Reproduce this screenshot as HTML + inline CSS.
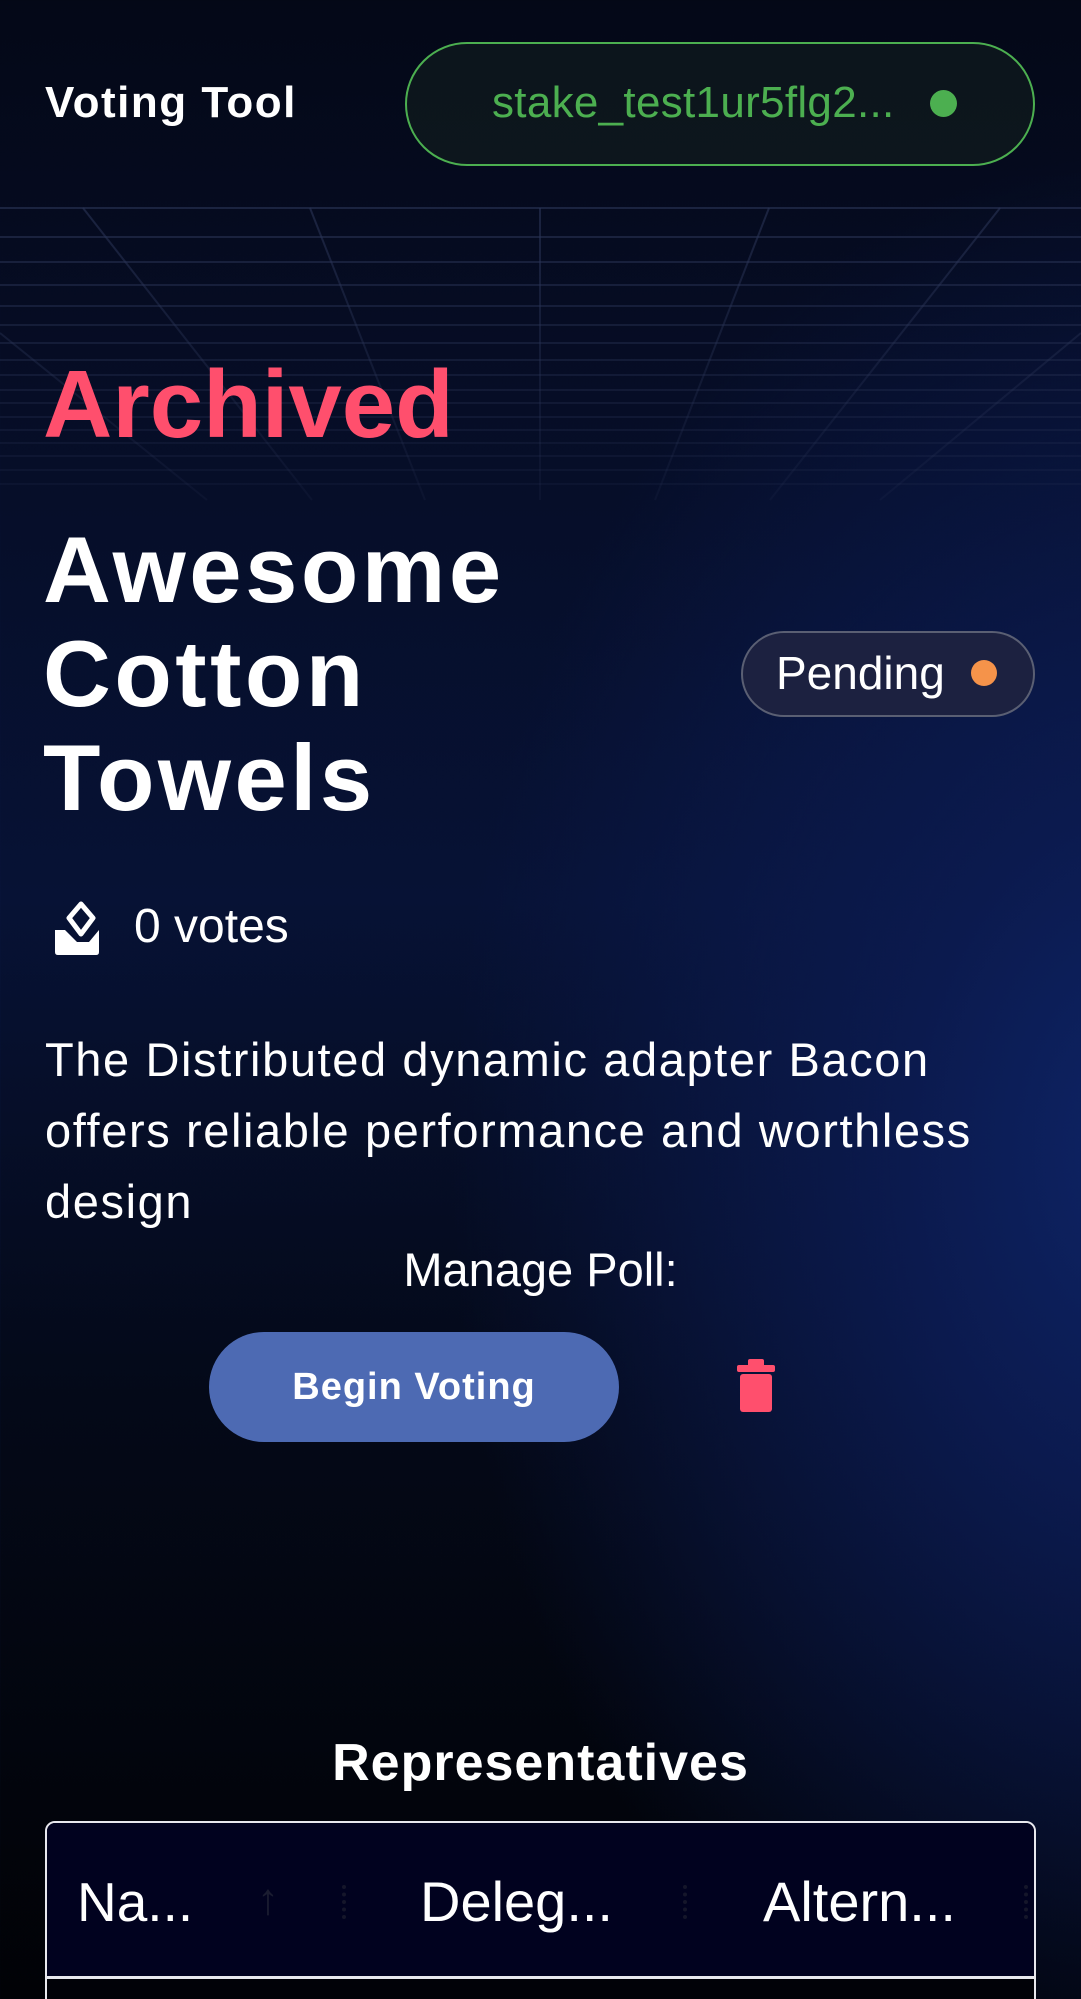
<!DOCTYPE html>
<html><head><meta charset="utf-8"><style>
*{margin:0;padding:0;box-sizing:border-box}
html,body{width:1081px;height:1999px;overflow:hidden}
body{position:relative;font-family:"Liberation Sans",sans-serif;color:#fff;
background:
radial-gradient(ellipse 700px 1000px at 1150px 1150px,#0e2466 0%,#0b1a4e 35%,rgba(6,12,40,0) 100%),
linear-gradient(180deg,#040817 0%,#060d26 20%,#071235 45%,#040918 70%,#010206 100%);}
.abs{position:absolute}
</style></head><body>
<svg class="abs" style="left:0;top:200px" width="1081" height="310" viewBox="0 200 1081 310">
<defs><linearGradient id="f" gradientUnits="userSpaceOnUse" x1="0" y1="208" x2="0" y2="500"><stop offset="0" stop-color="#2a3456" stop-opacity=".6"/><stop offset="1" stop-color="#2a3456" stop-opacity=".15"/></linearGradient></defs>
<g stroke="url(#f)" stroke-width="2" fill="none">
<line x1="0" y1="208" x2="1081" y2="208"/><line x1="0" y1="237" x2="1081" y2="237"/><line x1="0" y1="262" x2="1081" y2="262"/><line x1="0" y1="285" x2="1081" y2="285"/><line x1="0" y1="306" x2="1081" y2="306"/><line x1="0" y1="325" x2="1081" y2="325"/><line x1="0" y1="343" x2="1081" y2="343"/><line x1="0" y1="360" x2="1081" y2="360"/><line x1="0" y1="375" x2="1081" y2="375"/><line x1="0" y1="390" x2="1081" y2="390"/><line x1="0" y1="403" x2="1081" y2="403"/><line x1="0" y1="417" x2="1081" y2="417"/><line x1="0" y1="430" x2="1081" y2="430"/><line x1="0" y1="443" x2="1081" y2="443"/><line x1="0" y1="456" x2="1081" y2="456"/><line x1="0" y1="470" x2="1081" y2="470"/><line x1="0" y1="484" x2="1081" y2="484"/>
<line x1="83" y1="208" x2="312" y2="500"/><line x1="310" y1="208" x2="425" y2="500"/><line x1="540" y1="208" x2="540" y2="500"/><line x1="769" y1="208" x2="655" y2="500"/><line x1="1000" y1="208" x2="770" y2="500"/>
<line x1="0" y1="333" x2="207" y2="500"/><line x1="1081" y1="333" x2="880" y2="500"/>
</g></svg>

<div class="abs" style="left:45px;top:77px;font-size:44px;font-weight:bold;letter-spacing:1.5px;line-height:52px">Voting Tool</div>
<div class="abs" style="left:405px;top:42px;width:630px;height:124px;border:2.5px solid #4caf50;border-radius:62px;background:rgba(18,30,30,.6)"></div>
<div class="abs" style="left:492px;top:78px;font-size:44px;color:#4caf50;letter-spacing:.3px">stake_test1ur5flg2...</div>
<div class="abs" style="left:930px;top:90px;width:27px;height:27px;border-radius:50%;background:#4caf50"></div>

<div class="abs" style="left:43px;top:350px;font-size:96px;font-weight:bold;color:#ff4f6d;line-height:110px">Archived</div>
<div class="abs" style="left:43px;top:518px;font-size:94px;font-weight:bold;line-height:104px;letter-spacing:3.5px">Awesome<br>Cotton<br>Towels</div>

<div class="abs" style="left:741px;top:631px;width:294px;height:86px;border:2px solid #5a5f73;border-radius:43px;background:#1c2140"></div>
<div class="abs" style="left:776px;top:648px;font-size:46px;line-height:50px">Pending</div>
<div class="abs" style="left:971px;top:660px;width:26px;height:26px;border-radius:50%;background:#f5934a"></div>

<svg class="abs" style="left:51px;top:900px" width="52" height="56" viewBox="0 0 52 56">
<path d="M30 4 L42 18 L30 34 L18 18 Z" fill="none" stroke="#fff" stroke-width="5" stroke-linejoin="round"/>
<path d="M4 30 L14 30 L26 42 L38 42 L48 30 L48 52 Q48 55 45 55 L7 55 Q4 55 4 52 Z" fill="#fff"/>
</svg>
<div class="abs" style="left:134px;top:901px;font-size:48px;line-height:52px">0 votes</div>

<div class="abs" style="left:45px;top:1024px;width:1030px;font-size:47px;line-height:71px;letter-spacing:1.6px">The Distributed dynamic adapter Bacon<br>offers reliable performance and worthless<br>design</div>
<div class="abs" style="left:0;top:1244px;width:1081px;text-align:center;font-size:47px;line-height:52px">Manage Poll:</div>

<div class="abs" style="left:209px;top:1332px;width:410px;height:110px;border-radius:55px;background:#4d6ab3;text-align:center;line-height:110px;font-size:38px;font-weight:bold;letter-spacing:1px">Begin Voting</div>
<svg class="abs" style="left:735px;top:1358px" width="42" height="56" viewBox="0 0 42 56">
<rect x="2" y="7" width="38" height="7" rx="2" fill="#ff4f6d"/><rect x="13" y="1" width="16" height="8" rx="2" fill="#ff4f6d"/>
<rect x="5" y="16" width="32" height="38" rx="3" fill="#ff4f6d"/>
</svg>

<div class="abs" style="left:0;top:1733px;width:1081px;text-align:center;font-size:52px;font-weight:bold;line-height:60px;letter-spacing:1px">Representatives</div>

<div class="abs" style="left:45px;top:1821px;width:991px;height:200px;border:2.5px solid #e8e8ee;border-radius:10px;background:#02031a;overflow:hidden">
<div class="abs" style="left:0;top:0;width:100%;height:153px;background:#01021f"></div>
<div class="abs" style="left:0;top:153px;width:100%;height:3px;background:#e8e8ee"></div>
<div class="abs" style="left:0;top:156px;width:100%;height:60px;background:#010208"></div>
<div class="abs" style="left:30px;top:48px;font-size:55px;line-height:62px">Na...</div>
<div class="abs" style="left:210px;top:52px;font-size:44px;color:#1a1c30">↑</div>
<div class="abs" style="left:295px;top:62px;width:4px;height:34px;border-left:4px dotted #15162a"></div>
<div class="abs" style="left:373px;top:48px;font-size:56px;line-height:62px">Deleg...</div>
<div class="abs" style="left:636px;top:62px;width:4px;height:34px;border-left:4px dotted #15162a"></div>
<div class="abs" style="left:716px;top:48px;font-size:56px;line-height:62px">Altern...</div>
<div class="abs" style="left:977px;top:62px;width:4px;height:34px;border-left:4px dotted #15162a"></div>
</div>
</body></html>
